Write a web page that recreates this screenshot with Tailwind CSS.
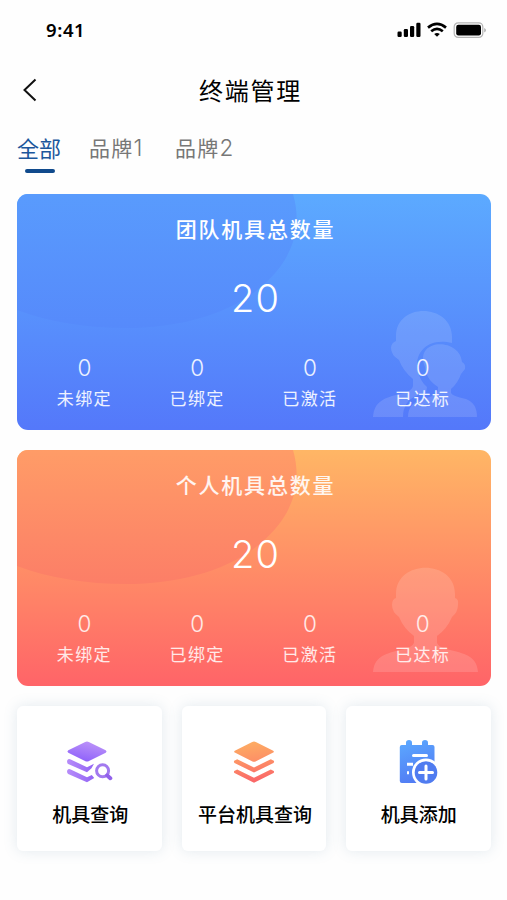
<!DOCTYPE html>
<html lang="zh-CN">
<head>
  <meta charset="UTF-8">
  <meta name="viewport" content="width=device-width, initial-scale=1.0">
  <title>终端管理</title>
  <script src="https://cdn.jsdelivr.net/npm/@tailwindcss/browser@4"></script>
</head>
<body class="bg-[#fefefe] text-black font-['Noto_Sans_CJK_SC',sans-serif] h-[900px] overflow-hidden">
  <!-- status bar -->
  <div class="h-[60px] pl-[46px] pr-[20px] flex items-center justify-between">
    <span class="font-['Noto_Sans',sans-serif] font-semibold text-[18.5px] tracking-[0.6px]">9:41</span>
    <div class="flex items-center gap-[6px]">
      <svg class="w-6 h-4" viewBox="0 0 24 16">
        <rect x="0.5" y="9.5" width="4.2" height="5.5" rx="1.2"/>
        <rect x="6.8" y="7" width="4.2" height="8" rx="1.2"/>
        <rect x="13" y="4" width="4.2" height="11" rx="1.2"/>
        <rect x="19.3" y="0.8" width="4.2" height="14.2" rx="1.2"/>
      </svg>
      <svg class="w-5 h-4" viewBox="0 0 20 16" fill="none" stroke="#000" stroke-width="2.7">
        <path d="M1 5.6Q10 -1.8 19 5.6"/>
        <path d="M4.2 9.3Q10 4.6 15.8 9.3"/>
        <path d="M7.2 12Q10 10 12.8 12L10 14.8Z" fill="#000" stroke="none"/>
      </svg>
      <svg class="w-[34px] h-4" viewBox="0 0 34 16">
        <rect x="1.2" y="0.8" width="28.6" height="14.6" rx="4" fill="none" stroke="#b5b5b5" stroke-width="1.2"/>
        <rect x="3.2" y="2.8" width="24.8" height="10.6" rx="2.2"/>
        <path d="M31.3 6v4.4q1.6-.8 1.6-2.2t-1.6-2.2z" fill="#a8a8a8"/>
      </svg>
    </div>
  </div>

  <!-- title bar -->
  <header class="h-[60px] px-[22px] grid grid-cols-[1fr_auto_1fr] items-center">
    <svg class="w-4 h-6" viewBox="0 0 16 24" fill="none" stroke="#111" stroke-width="2"><path d="M13.5 1.5L2.5 12l11 10.5"/></svg>
    <h1 class="text-[24px] tracking-[1.7px] pr-[6px]">终端管理</h1>
    <span></span>
  </header>

  <nav class="h-[74px] pt-[11px] pl-[17px] flex items-start text-[22px] leading-8 text-[#777]">
    <a href="#" class="w-[72px] flex flex-col text-[#1c579c]">全部
      <span class="w-[30px] h-1 mt-[6px] ml-2 rounded-full bg-[#104a8c]"></span>
    </a>
    <a href="#" class="w-[86px] text-[21px] tracking-[1.2px]">品牌<span class="font-[Inter,sans-serif] font-light text-[22.5px]">1</span></a>
    <a href="#" class="text-[21px] tracking-[1.2px]">品牌<span class="font-[Inter,sans-serif] font-light text-[22.5px]">2</span></a>
  </nav>

  <main class="pl-[17px] pr-4 flex flex-col gap-5">
    <section class="relative h-[236px] rounded-[11px] overflow-hidden text-white">
      <svg class="absolute inset-0 w-full h-full" viewBox="0 0 474 236">
        <defs>
          <linearGradient id="blue" x2="0" y2="1"><stop stop-color="#5caaff"/><stop offset="1" stop-color="#5478fa"/></linearGradient>
          <linearGradient id="blueBlob" gradientUnits="userSpaceOnUse" x1="0" y1="0" x2="0" y2="134"><stop stop-color="#599bfd"/><stop offset="1" stop-color="#568afb"/></linearGradient>
        </defs>
        <path d="M0 0H474V236H0Z" fill="url(#blue)"/>
        <path d="M0 0H276C287 38 272 69 245 92C212 121 160 134 110 134C70 134 32 128 0 116Z" fill="url(#blueBlob)"/>
        <g fill="#fff" fill-opacity=".13">
          <path d="M356 223C357 208 366 204 383 200Q397 197 396 190V185Q386 177 382 166Q374 161 374 154Q374 149 379 147V142C379 108 435 109 435 143V149C412 143 396 158 401 177Q403 187 410 193L409 199Q394 202 390 209Q386 215 386 223Z"/>
          <path d="M391 223C391 213 397 206 410 204Q422 201 421 193C412 187 409 181 408 173C396 144 443 143 445 168Q449 170 448 175L444 180Q441 189 434 195V199Q435 202 449 205Q460 209 460 223Z"/>
        </g>
      </svg>
      <div class="relative h-full flex flex-col items-center">
        <h2 class="mt-[18px] pl-[3px] text-[21px] leading-8 font-medium tracking-[1.8px]">团队机具总数量</h2>
        <p class="mt-[30px] h-12 leading-12 pl-[3px] text-[38px] font-light tracking-[1px] font-[Inter,sans-serif]">20</p>
        <ul class="mt-[32px] w-full pl-[11px] pr-3 grid grid-cols-4 text-center text-white/90">
          <li><b class="block text-[22.5px] leading-7 font-[350] font-[Inter,sans-serif]">0</b><span class="block mt-[2px] text-[17px] leading-7 tracking-[1.4px]">未绑定</span></li>
          <li><b class="block text-[22.5px] leading-7 font-[350] font-[Inter,sans-serif]">0</b><span class="block mt-[2px] text-[17px] leading-7 tracking-[1.4px]">已绑定</span></li>
          <li><b class="block text-[22.5px] leading-7 font-[350] font-[Inter,sans-serif]">0</b><span class="block mt-[2px] text-[17px] leading-7 tracking-[1.4px]">已激活</span></li>
          <li><b class="block text-[22.5px] leading-7 font-[350] font-[Inter,sans-serif]">0</b><span class="block mt-[2px] text-[17px] leading-7 tracking-[1.4px]">已达标</span></li>
        </ul>
      </div>
    </section>

    <section class="relative h-[236px] rounded-[11px] overflow-hidden text-white">
      <svg class="absolute inset-0 w-full h-full" viewBox="0 0 474 236">
        <defs>
          <linearGradient id="orange" x2="0" y2="1"><stop stop-color="#ffb665"/><stop offset="1" stop-color="#ff6468"/></linearGradient>
          <linearGradient id="orangeBlob" gradientUnits="userSpaceOnUse" x1="0" y1="0" x2="0" y2="134"><stop stop-color="#ff9c67"/><stop offset="1" stop-color="#fc7e67"/></linearGradient>
        </defs>
        <path d="M0 0H474V236H0Z" fill="url(#orange)"/>
        <path d="M0 0H276C287 38 272 69 245 92C212 121 160 134 110 134C70 134 32 128 0 116Z" fill="url(#orangeBlob)"/>
        <path d="M356 222C357 208 366 204 383 200Q398 197 397 191V186Q387 179 382 167Q375 162 375 155Q375 149 379 148V144C379 109 438 109 438 144V148Q442 149 441 155Q441 162 435 167Q430 179 420 186V191Q419 197 433 200C451 204 460 208 461 222Z" fill="#fff" fill-opacity=".14"/>
      </svg>
      <div class="relative h-full flex flex-col items-center">
        <h2 class="mt-[18px] pl-[3px] text-[21px] leading-8 font-medium tracking-[1.8px] text-white/90">个人机具总数量</h2>
        <p class="mt-[30px] h-12 leading-12 pl-[3px] text-[38px] font-light tracking-[1px] font-[Inter,sans-serif]">20</p>
        <ul class="mt-[32px] w-full pl-[11px] pr-3 grid grid-cols-4 text-center text-white/85">
          <li><b class="block text-[22.5px] leading-7 font-[350] font-[Inter,sans-serif]">0</b><span class="block mt-[2px] text-[17px] leading-7 tracking-[1.4px]">未绑定</span></li>
          <li><b class="block text-[22.5px] leading-7 font-[350] font-[Inter,sans-serif]">0</b><span class="block mt-[2px] text-[17px] leading-7 tracking-[1.4px]">已绑定</span></li>
          <li><b class="block text-[22.5px] leading-7 font-[350] font-[Inter,sans-serif]">0</b><span class="block mt-[2px] text-[17px] leading-7 tracking-[1.4px]">已激活</span></li>
          <li><b class="block text-[22.5px] leading-7 font-[350] font-[Inter,sans-serif]">0</b><span class="block mt-[2px] text-[17px] leading-7 tracking-[1.4px]">已达标</span></li>
        </ul>
      </div>
    </section>

    <div class="grid grid-cols-3 gap-5 text-[19px] font-medium leading-7 whitespace-nowrap">
      <a href="#" class="h-[145px] pt-8 flex flex-col items-center gap-[14px] rounded-md bg-white shadow-[0_0_14px_rgba(90,130,160,0.17)]">
        <svg class="w-12 h-12" viewBox="1 0 48 48">
          <defs>
            <linearGradient id="purple" x1="1" x2="0.6" y2="1"><stop stop-color="#c39bf8"/><stop offset="1" stop-color="#9265fa"/></linearGradient>
            <linearGradient id="purpleBar"><stop stop-color="#b78df9"/><stop offset="1" stop-color="#9264f5"/></linearGradient>
          </defs>
          <path d="M21.2 3.9Q23 3 24.8 3.9L41.7 12.3Q43.5 13.5 41.7 14.8L25 23Q23 24 21 23L4.3 14.8Q2.5 13.5 4.3 12.3Z" fill="url(#purple)"/>
          <path d="M3.3 22.2Q4.5 20.4 6.7 21.4L23 29.3L30 25.8L27.5 30.3L23 34.3L4.2 26Q2.5 25 3.3 22.2ZM3.3 32.2Q4.5 30.4 6.7 31.4L23 39.3L27.8 37L30.2 40L23 44.3L4.2 36Q2.5 35 3.3 32.2Z" fill="url(#purpleBar)"/>
          <circle cx="38.6" cy="32.8" r="6" fill="none" stroke="#a27aef" stroke-width="3"/>
          <path d="M43.2 37.5L46.3 40.2" stroke="#9261eb" stroke-width="4" stroke-linecap="round"/>
        </svg>
        <span class="pl-[2px]">机具查询</span>
      </a>
      <a href="#" class="h-[145px] pt-8 flex flex-col items-center gap-[14px] rounded-md bg-white shadow-[0_0_14px_rgba(90,130,160,0.17)]">
        <svg class="w-12 h-12" viewBox="0 0 48 48">
          <defs>
            <linearGradient id="coral" gradientUnits="userSpaceOnUse" x1="8" y1="3" x2="14" y2="44"><stop stop-color="#fdb062"/><stop offset=".5" stop-color="#fd9266"/><stop offset="1" stop-color="#fa6868"/></linearGradient>
          </defs>
          <g fill="url(#coral)">
            <path d="M22.2 3.9Q24 3 25.8 3.9L43.2 12.8Q44.5 13.7 43.2 14.6L26 23.2Q24 24.2 22 23.2L4.8 14.6Q3.5 13.7 4.8 12.8Z"/>
            <path d="M4.2 22.8L7.2 21.2L24 29.5L40.8 21.2L43.8 22.8Q44.5 24 43.5 24.9L24 34.5L4.5 24.9Q3.5 24 4.2 22.8ZM4.2 33L7.2 31.4L24 39.7L40.8 31.4L43.8 33Q44.5 34.2 43.5 35.1L24 44.7L4.5 35.1Q3.5 34.2 4.2 33Z"/>
          </g>
        </svg>
        <span class="pl-[2px]">平台机具查询</span>
      </a>
      <a href="#" class="h-[145px] pt-8 flex flex-col items-center gap-[14px] rounded-md bg-white shadow-[0_0_14px_rgba(90,130,160,0.17)]">
        <svg class="w-12 h-12" viewBox="0 0 48 48">
          <defs>
            <linearGradient id="sky" x2="0.3" y2="1"><stop stop-color="#5caaff"/><stop offset="1" stop-color="#527df4"/></linearGradient>
          </defs>
          <path d="M6.8 7H11V4.8Q11 2 14 2T17 4.8V7H27V4.8Q27 2 30 2T33 4.8V7H37.5Q39.5 7 39.5 9V45H6.8Q4.8 45 4.8 43V9Q4.8 7 6.8 7Z" fill="url(#sky)"/>
          <path d="M18.5 17.5H31.5" stroke="#fff" stroke-width="3" stroke-linecap="round"/>
          <path d="M12 26.2H18M12 34.8H14" stroke="#fff" stroke-width="3"/>
          <circle cx="31" cy="34.5" r="14" fill="#fff"/>
          <path d="M31 34.5H46V48H24Z" fill="#fff"/>
          <circle cx="31" cy="34.5" r="11.3" fill="#507cf0"/>
          <path d="M31 28V41M24.5 34.5H37.5" stroke="#fff" stroke-width="3" stroke-linecap="round"/>
        </svg>
        <span>机具添加</span>
      </a>
    </div>
  </main>
</body>
</html>
